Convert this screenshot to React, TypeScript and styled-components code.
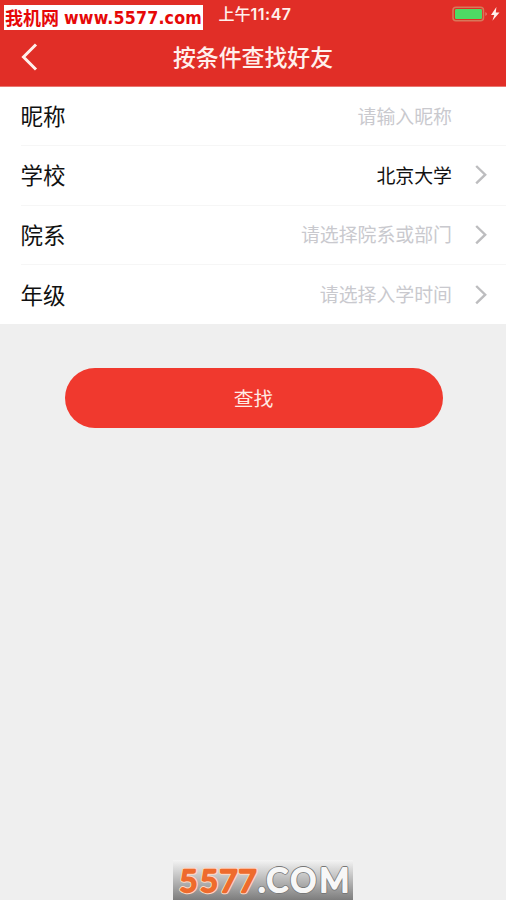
import React from "react";
import styled, { createGlobalStyle } from "styled-components";

const GlobalStyle = createGlobalStyle`
  * { box-sizing: border-box; }
  body { margin: 0; background: #efefef; }
`;

const Screen = styled.main`
  position: relative;
  display: flex;
  flex-direction: column;
  width: 506px;
  height: 900px;
  overflow: hidden;
  background: #efefef;
  font-family: Roboto, "Noto Sans CJK SC", sans-serif;
`;

const Header = styled.header`
  height: 87px;
  flex: none;
  background: #e12e27;
  border-bottom: 1px solid #e97770;
  color: #fff0ec;
`;

const StatusBar = styled.div`
  display: grid;
  grid-template-columns: 1fr auto 1fr;
  align-items: center;
  height: 28px;
  padding: 0 6px 0 10px;
`;

const Clock = styled.time`
  grid-column: 2;
  display: flex;
  align-items: center;
  font: 500 16px/28px Inter, "Noto Sans CJK SC", sans-serif;
`;

const Digits = styled.span`
  font-weight: 600;
  letter-spacing: 0.5px;
`;

const Power = styled.svg`
  justify-self: end;
  width: 50px;
  height: 20px;
`;

const NavBar = styled.div`
  display: grid;
  grid-template-columns: 60px 1fr 60px;
  align-items: center;
  height: 58px;
`;

const BackButton = styled.button`
  display: flex;
  width: 60px;
  height: 58px;
  padding: 13px 0 0 20px;
  border: 0;
  background: none;
  color: inherit;
`;

const Title = styled.h1`
  margin: 0;
  padding-top: 2px;
  text-align: center;
  font-size: 22.9px;
  line-height: 58px;
  font-weight: 500;
`;

const Form = styled.section`
  flex: none;
  height: 237px;
  padding-left: 20.5px;
  background: #fff;
`;

const Row = styled.div`
  display: flex;
  align-items: center;
  height: 59.3px;
  border-bottom: 1px solid #f6f6f6;
  &:last-child { border-bottom: 0; }
`;

const Label = styled.span`
  flex: 1;
  padding-top: 2px;
  color: #111;
  font-size: 22.5px;
  line-height: 56px;
`;

const Value = styled.span<{ $filled?: boolean }>`
  padding-top: 3px;
  color: ${({ $filled }) => ($filled ? "#111" : "#c9c9ce")};
  font-size: 18.9px;
  line-height: 56px;
`;

const Accessory = styled.span`
  display: flex;
  width: 54px;
  padding-left: 22.5px;
`;

const SearchButton = styled.button`
  flex: none;
  width: 378px;
  height: 60px;
  margin: 44px 0 0 65px;
  padding: 3px 1px 0 0;
  border: 0;
  border-radius: 30px;
  background: #f0392e;
  color: #ffebe5;
  font: 400 19.8px/57px Roboto, "Noto Sans CJK SC", sans-serif;
`;

const SiteTag = styled.div`
  position: absolute;
  left: 4px;
  top: 5px;
  display: flex;
  align-items: center;
  gap: 5px;
  width: 199px;
  height: 25px;
  padding-left: 1px;
  background: #fff;
  color: #e60808;
  white-space: nowrap;
  font: 700 18px/25px "Noto Sans CJK SC", sans-serif;
`;

const SiteAddress = styled.span`
  font: 700 17.6px/22px "DejaVu Sans Condensed", "DejaVu Sans", sans-serif;
  font-stretch: condensed;
  letter-spacing: 0.2px;
`;

const SiteLogo = styled.svg`
  position: absolute;
  left: 173px;
  bottom: 0;
  width: 180px;
  height: 40px;
  font-family: Lato, sans-serif;
  font-size: 31px;
  font-weight: 400;
  stroke-linejoin: round;
  stroke-linecap: round;
`;

const fields = [
  { label: "昵称", value: "请输入昵称" },
  { label: "学校", value: "北京大学", filled: true, picker: true },
  { label: "院系", value: "请选择院系或部门", picker: true },
  { label: "年级", value: "请选择入学时间", picker: true },
];

function Chevron() {
  return (
    <svg width="13" height="20" viewBox="0 0 13 20" fill="none" stroke="#bdbdbf" strokeWidth="2.4">
      <path d="M1.2 1 L10.2 9.7 L1.2 18.4" />
    </svg>
  );
}

export default function App() {
  return (
    <Screen>
      <GlobalStyle />
      <Header>
        <StatusBar>
          <Clock>上午<Digits>11:47</Digits></Clock>
          <Power viewBox="0 0 50 20">
            <rect x="3" y="3.2" width="30.5" height="13.6" rx="3" fill="none" stroke="#d8785a" strokeWidth="1.5" />
            <rect x="5" y="5" width="27" height="10" rx="1.2" fill="#4fd964" />
            <path d="M35.5 8 Q38 10 35.5 12Z" fill="#e98e7b" />
            <path d="M46.4 3 L41 10.9 H44.3 L42.4 16.7 L49.5 8.5 H45.8Z" fill="#fff0ec" />
          </Power>
        </StatusBar>
        <NavBar>
          <BackButton aria-label="返回">
            <svg width="20" height="30" viewBox="0 0 20 30" fill="none" stroke="currentColor" strokeWidth="3">
              <path d="M16 2.5 L3.5 15 L16 27.5" />
            </svg>
          </BackButton>
          <Title>按条件查找好友</Title>
        </NavBar>
      </Header>
      <Form>
        {fields.map(({ label, value, filled, picker }) => (
          <Row key={label}>
            <Label>{label}</Label>
            <Value $filled={filled}>{value}</Value>
            <Accessory>{picker && <Chevron />}</Accessory>
          </Row>
        ))}
      </Form>
      <SearchButton>查找</SearchButton>
      <SiteTag>
        我机网<SiteAddress>www.5577.com</SiteAddress>
      </SiteTag>
      <SiteLogo viewBox="0 0 180 40">
        <defs>
          <linearGradient id="plate" x1="0" y1="0" x2="0" y2="1">
            <stop offset="0" stopColor="#f4f4f4" />
            <stop offset="1" stopColor="#7d7d7d" />
          </linearGradient>
        </defs>
        <rect width="180" height="40" fill="url(#plate)" />
        <text x="6.5 27 46.5 65.5" y="32" fill="#ffd9c4" stroke="#ffd9c4" strokeWidth="4.4">5577</text>
        <text x="6.5 27 46.5 65.5" y="32" fill="#ee6b2d" stroke="#ee6b2d" strokeWidth="2.4">5577</text>
        <text x="85 93.5 117.5 146.5" y="32" fill="#777" stroke="#777" strokeWidth="3.8" fontSize="32">.COM</text>
        <text x="85 93.5 117.5 146.5" y="32" fill="#f7f7f7" stroke="#f7f7f7" strokeWidth="2.2" fontSize="32">.COM</text>
      </SiteLogo>
    </Screen>
  );
}
